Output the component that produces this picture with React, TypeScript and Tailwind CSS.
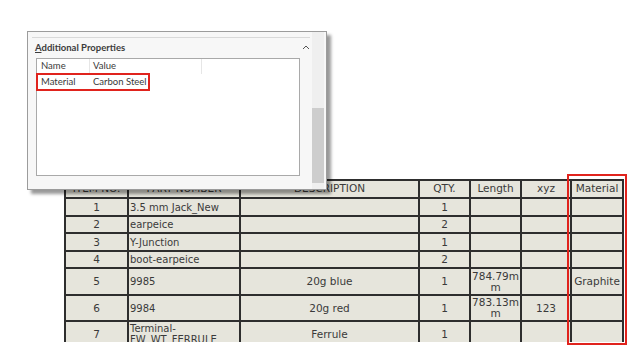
import React from "react";

const tableFont = { fontFamily: '"DejaVu Sans", "Liberation Sans", sans-serif' };
const uiFont = { fontFamily: 'Lato, "Noto Sans", sans-serif' };

type Row = {
  item: string;
  part: string;
  desc: string;
  qty: string;
  length: string;
  xyz: string;
  material: string;
  h: string;
  top?: boolean;
};

const rows: Row[] = [
  { item: "1", part: "3.5 mm Jack_New", desc: "", qty: "1", length: "", xyz: "", material: "", h: "h-[16px]" },
  { item: "2", part: "earpeice", desc: "", qty: "2", length: "", xyz: "", material: "", h: "h-[15px]" },
  { item: "3", part: "Y-Junction", desc: "", qty: "1", length: "", xyz: "", material: "", h: "h-[16px]" },
  { item: "4", part: "boot-earpeice", desc: "", qty: "2", length: "", xyz: "", material: "", h: "h-[15px]" },
  { item: "5", part: "9985", desc: "20g blue", qty: "1", length: "784.79m m", xyz: "", material: "Graphite", h: "h-[25px]" },
  { item: "6", part: "9984", desc: "20g red", qty: "1", length: "783.13m m", xyz: "123", material: "", h: "h-[24px]" },
  { item: "7", part: "Terminal-\nFW_WT_FERRULE\n_W_T_", desc: "Ferrule", qty: "1", length: "", xyz: "", material: "", h: "h-[24px]", top: true },
];

function clsxLite(...parts: string[]) {
  return parts.join(" ");
}

const Cell = ({ children, left, top, h }: { children?: React.ReactNode; left?: boolean; top?: boolean; h: string }) => (
  <div
    className={clsxLite(
      h,
      "bg-[#e6e5dc] flex overflow-hidden text-[10.5px] leading-[11px] text-[#3a3a3a]",
      left ? "justify-start pl-[1px] text-[10px] leading-[10px] whitespace-pre-line" : "justify-center text-center",
      top ? "items-start pt-[1px]" : "items-center"
    )}
  >
    {children}
  </div>
);

const BomTable = () => {
  const headers = ["ITEM NO.", "PART NUMBER", "DESCRIPTION", "QTY.", "Length", "xyz", "Material"];
  return (
    <div className="ml-[64px] mt-[179px] h-[163px] w-[560px] overflow-hidden" style={tableFont}>
      <div className="grid grid-cols-[61px_110px_177px_49px_49px_48px_50px] gap-[2px] bg-[#2e2e2e] p-[2px]">
        {headers.map((t) => (
          <div key={t} className="flex h-[16px] items-start justify-center bg-[#e6e5dc] pt-[2px] text-[10.5px] leading-[11px] text-[#3a3a3a]">
            {t}
          </div>
        ))}
        {rows.map((r) => (
          <React.Fragment key={r.item}>
            <Cell h={r.h}>{r.item}</Cell>
            <Cell h={r.h} left top={r.top}>
              {r.part}
            </Cell>
            <Cell h={r.h}>{r.desc}</Cell>
            <Cell h={r.h}>{r.qty}</Cell>
            <Cell h={r.h}>{r.length}</Cell>
            <Cell h={r.h}>{r.xyz}</Cell>
            <Cell h={r.h}>{r.material}</Cell>
          </React.Fragment>
        ))}
      </div>
    </div>
  );
};

const PropertiesDialog = () => (
  <div
    className="absolute left-[27px] top-[31px] flex h-[159px] w-[300px] border border-[#9c9c9c] bg-[#f7f7f7] shadow-[4px_4px_3px_rgba(0,0,0,0.4)]"
    style={uiFont}
  >
    <div className="flex flex-1 flex-col pl-[4px] pt-[5px]">
      <div className="mr-[2px] border-t border-[#d9d9d9]" />
      <div className="flex h-[20px] items-center justify-between pl-[3px] pr-[2px]">
        <span className="text-[9.5px] font-bold text-[#3c3c3c]">
          <span className="underline">A</span>dditional Properties
        </span>
        <svg width="8" height="5" viewBox="0 0 8 5" className="mt-[-2px]">
          <path d="M1 4 L4 1 L7 4" fill="none" stroke="#555" strokeWidth="1" />
        </svg>
      </div>
      <div className="relative ml-[4px] mr-[12px] h-[118px] border border-[#a9a9a9] bg-white text-[9.5px] text-[#3a3a3a]">
        <div className="flex h-[15px] items-center">
          <span className="w-[52px] pl-[4px]">Name</span>
          <span className="h-full border-l border-[#e6e6e6]" />
          <span className="w-[111px] pl-[3px]">Value</span>
          <span className="h-full border-l border-[#e6e6e6]" />
        </div>
        <div className="flex h-[17px] items-center">
          <span className="w-[52px] pl-[4px]">Material</span>
          <span className="pl-[4px]">Carbon Steel</span>
        </div>
        <div className="absolute left-[-1px] top-[14px] h-[18px] w-[114px] border-2 border-[#e0231d]" />
      </div>
    </div>
    <div className="mr-[2px] flex w-[12px] flex-col bg-[#efefef]">
      <div className="mt-[76px] h-[75px] bg-[#cdcdcd]" />
    </div>
  </div>
);

export default function App() {
  return (
    <div className="relative h-[360px] w-[640px] overflow-hidden bg-white">
      <BomTable />
      <PropertiesDialog />
      <div className="absolute left-[567px] top-[174px] h-[171px] w-[60px] border-2 border-[#e0231d]" />
    </div>
  );
}
